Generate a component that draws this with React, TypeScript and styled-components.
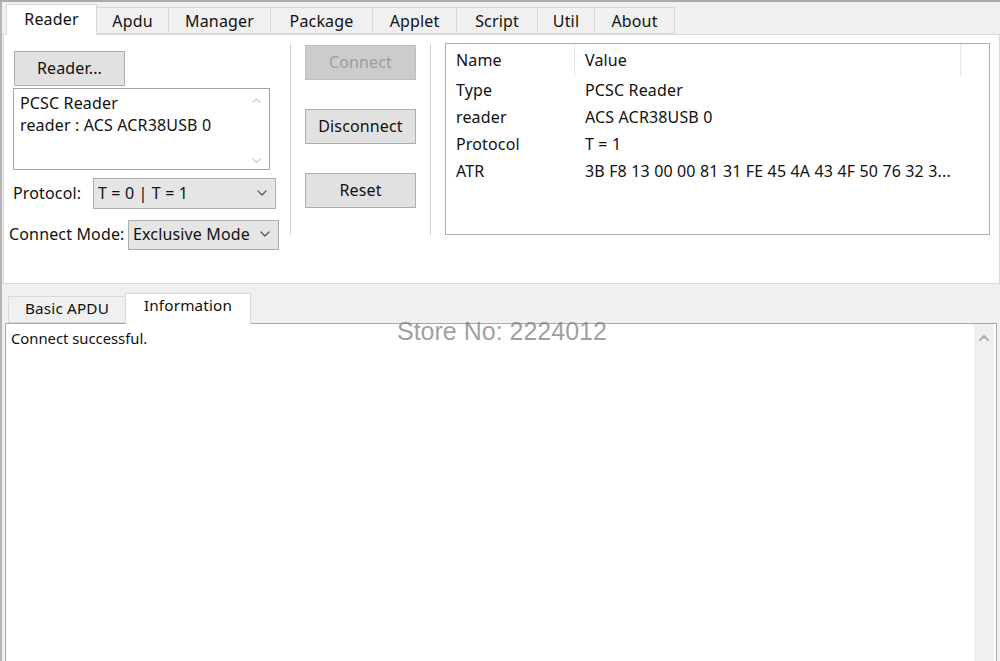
import styled, { createGlobalStyle } from 'styled-components'

const GlobalStyle = createGlobalStyle`
  html, body {
    margin: 0;
    padding: 0;
    background: #f0f0f0;
  }
  body {
    font-family: 'Noto Sans', 'Open Sans', sans-serif;
    font-size: 16px;
    letter-spacing: 0.15px;
    color: #111;
  }
  * {
    box-sizing: border-box;
  }
`

const Window = styled.div`
  position: relative;
  width: 1000px;
  height: 661px;
  overflow: hidden;
  background: #f0f0f0;
  border-top: 2px solid #ababab;
  border-left: 2px solid #b4b4b4;
  padding-left: 1px;
  display: flex;
  flex-direction: column;
`

const TabBar = styled.div<{ $height: number; $indent: number }>`
  display: flex;
  align-items: flex-end;
  height: ${({ $height }) => $height}px;
  padding-left: ${({ $indent }) => $indent}px;
  position: relative;
  z-index: 1;
`

const Tab = styled.div<{ $width: number; $active?: boolean; $small?: boolean }>`
  width: ${({ $width }) => $width}px;
  height: ${({ $active }) => ($active ? 31 : 27)}px;
  margin-bottom: ${({ $active }) => ($active ? -1 : 0)}px;
  background: ${({ $active }) => ($active ? '#ffffff' : '#f0f0f0')};
  border: 1px solid #d9d9d9;
  border-bottom: ${({ $active }) => ($active ? 'none' : '1px solid #d9d9d9')};
  margin-right: -1px;
  display: flex;
  align-items: ${({ $active }) => ($active ? 'flex-start' : 'center')};
  padding-top: ${({ $active, $small }) => ($active ? ($small ? 1 : 3) : 0)}px;
  padding-bottom: ${({ $active, $small }) => (!$active && $small ? 3 : 0)}px;
  font-size: ${({ $small }) => ($small ? 15.3 : 16)}px;
  justify-content: center;
  color: #111;
  white-space: nowrap;
`

const TabPage = styled.div`
  height: 250px;
  background: #ffffff;
  border: 1px solid #d9d9d9;
`

const TopRow = styled.div`
  display: flex;
  align-items: flex-start;
  padding-left: 5px;
`

const LeftCol = styled.div`
  width: 281px;
  padding-top: 16px;
  display: flex;
  flex-direction: column;
`

const Button = styled.div<{ $disabled?: boolean }>`
  width: 111px;
  height: 35px;
  background: ${({ $disabled }) => ($disabled ? '#cccccc' : '#e1e1e1')};
  border: 1px solid ${({ $disabled }) => ($disabled ? '#bfbfbf' : '#adadad')};
  color: ${({ $disabled }) => ($disabled ? '#9c9c9c' : '#111')};
  display: flex;
  align-items: center;
  justify-content: center;
  padding-bottom: 1px;
`

const ReaderButton = styled(Button)`
  margin-left: 5px;
`

const ListBox = styled.div`
  position: relative;
  margin-left: 4px;
  margin-top: 2px;
  width: 257px;
  height: 82px;
  border: 1px solid #a5a5a5;
  padding: 3px 0 0 6px;
  line-height: 22px;
`

const ScrollArrow = styled.div<{ $top?: number; $bottom?: number; $right: number }>`
  position: absolute;
  right: ${({ $right }) => $right}px;
  ${({ $top }) => ($top !== undefined ? `top: ${$top}px;` : '')}
  ${({ $bottom }) => ($bottom !== undefined ? `bottom: ${$bottom}px;` : '')}
  line-height: 0;
`

const FieldRow = styled.div<{ $indent: number; $top: number }>`
  display: flex;
  align-items: center;
  margin-left: ${({ $indent }) => $indent}px;
  margin-top: ${({ $top }) => $top}px;
`

const Label = styled.span<{ $width: number }>`
  width: ${({ $width }) => $width}px;
  white-space: nowrap;
  padding-bottom: 2px;
`

const Select = styled.div<{ $width: number; $height: number }>`
  width: ${({ $width }) => $width}px;
  height: ${({ $height }) => $height}px;
  background: #e5e5e5;
  border: 1px solid #acacac;
  display: flex;
  align-items: center;
  justify-content: space-between;
  padding: 0 8px 2px 4px;
  white-space: nowrap;
`

const Separator = styled.div`
  width: 1px;
  height: 191px;
  margin-top: 9px;
  background: #cfcfcf;
`

const MiddleCol = styled.div`
  margin: 0 14px;
  padding-top: 10px;
  display: flex;
  flex-direction: column;
  gap: 29px;
`

const ListView = styled.div`
  margin-left: 14px;
  margin-top: 8px;
  width: 545px;
  height: 192px;
  border: 1px solid #adadad;
`

const Grid = styled.div`
  display: grid;
  grid-template-columns: 129px 386px;
`

const HeaderCell = styled.div`
  height: 32px;
  padding: 5px 0 0 10px;
  border-right: 1px solid #e5e5e5;
  white-space: nowrap;
`

const Cell = styled.div`
  height: 27px;
  padding: 3px 0 0 10px;
  white-space: nowrap;
  overflow: hidden;
`

const Output = styled.div`
  position: relative;
  flex: 1;
  margin: 0 3px 0 2px;
  background: #ffffff;
  border: 1px solid #a8a8a8;
  border-bottom: none;
  padding: 4px 0 0 5px;
  font-size: 14.8px;
  letter-spacing: 0;
`

const ScrollBar = styled.div`
  position: absolute;
  top: 0;
  right: 2px;
  bottom: 0;
  width: 20px;
  background: #f0f0f0;
  display: flex;
  justify-content: center;
  padding-top: 11px;
`

const Watermark = styled.div`
  position: absolute;
  left: 395px;
  top: 315px;
  font-family: 'Liberation Sans', Arial, sans-serif;
  font-size: 25px;
  letter-spacing: 0;
  color: rgba(128, 128, 128, 0.75);
  white-space: nowrap;
  z-index: 5;
`

const Chevron = ({ up, size, color, weight }: { up?: boolean; size: number; color: string; weight: number }) => (
  <svg width={size} height={size * 0.6} viewBox="0 0 10 6" fill="none">
    <path
      d={up ? 'M1 5 L5 1 L9 5' : 'M1 1 L5 5 L9 1'}
      stroke={color}
      strokeWidth={weight}
      strokeLinecap="round"
      strokeLinejoin="round"
    />
  </svg>
)

const mainTabs = [
  { title: 'Reader', width: 91 },
  { title: 'Apdu', width: 73 },
  { title: 'Manager', width: 103 },
  { title: 'Package', width: 103 },
  { title: 'Applet', width: 85 },
  { title: 'Script', width: 82 },
  { title: 'Util', width: 58 },
  { title: 'About', width: 81 }
]

const rows: Array<[string, string]> = [
  ['Type', 'PCSC Reader'],
  ['reader', 'ACS ACR38USB 0'],
  ['Protocol', 'T = 1'],
  ['ATR', '3B F8 13 00 00 81 31 FE 45 4A 43 4F 50 76 32 3...']
]

const App = (): JSX.Element => {
  return (
    <Window>
      <GlobalStyle />
      <TabBar $height={32} $indent={3}>
        {mainTabs.map(({ title, width }, i) => (
          <Tab key={title} $width={width} $active={i === 0}>
            {title}
          </Tab>
        ))}
      </TabBar>
      <TabPage>
        <TopRow>
          <LeftCol>
            <ReaderButton>Reader...</ReaderButton>
            <ListBox>
              <div>PCSC Reader</div>
              <div>reader : ACS ACR38USB 0</div>
              <ScrollArrow $right={8} $top={8}>
                <Chevron up size={9} color="#c4c4c4" weight={1.2} />
              </ScrollArrow>
              <ScrollArrow $right={8} $bottom={6}>
                <Chevron size={9} color="#c4c4c4" weight={1.2} />
              </ScrollArrow>
            </ListBox>
            <FieldRow $indent={4} $top={8}>
              <Label $width={80}>Protocol:</Label>
              <Select $width={183} $height={31}>
                T = 0 | T = 1
                <Chevron size={10} color="#555" weight={1.2} />
              </Select>
            </FieldRow>
            <FieldRow $indent={0} $top={11}>
              <Label $width={119}>Connect Mode:</Label>
              <Select $width={151} $height={30}>
                Exclusive Mode
                <Chevron size={10} color="#555" weight={1.2} />
              </Select>
            </FieldRow>
          </LeftCol>
          <Separator />
          <MiddleCol>
            <Button $disabled>Connect</Button>
            <Button>Disconnect</Button>
            <Button>Reset</Button>
          </MiddleCol>
          <Separator />
          <ListView>
            <Grid>
              <HeaderCell>Name</HeaderCell>
              <HeaderCell>Value</HeaderCell>
              {rows.map(([name, value]) => [
                <Cell key={name}>{name}</Cell>,
                <Cell key={name + '-v'}>{value}</Cell>
              ])}
            </Grid>
          </ListView>
        </TopRow>
      </TabPage>
      <TabBar $height={39} $indent={5}>
        <Tab $width={118} $small>
          Basic APDU
        </Tab>
        <Tab $width={126} $active $small>
          Information
        </Tab>
      </TabBar>
      <Output>
        Connect successful.
        <ScrollBar>
          <Chevron up size={10} color="#a8a8a8" weight={1.8} />
        </ScrollBar>
      </Output>
      <Watermark>Store No: 2224012</Watermark>
    </Window>
  )
}

export default App
